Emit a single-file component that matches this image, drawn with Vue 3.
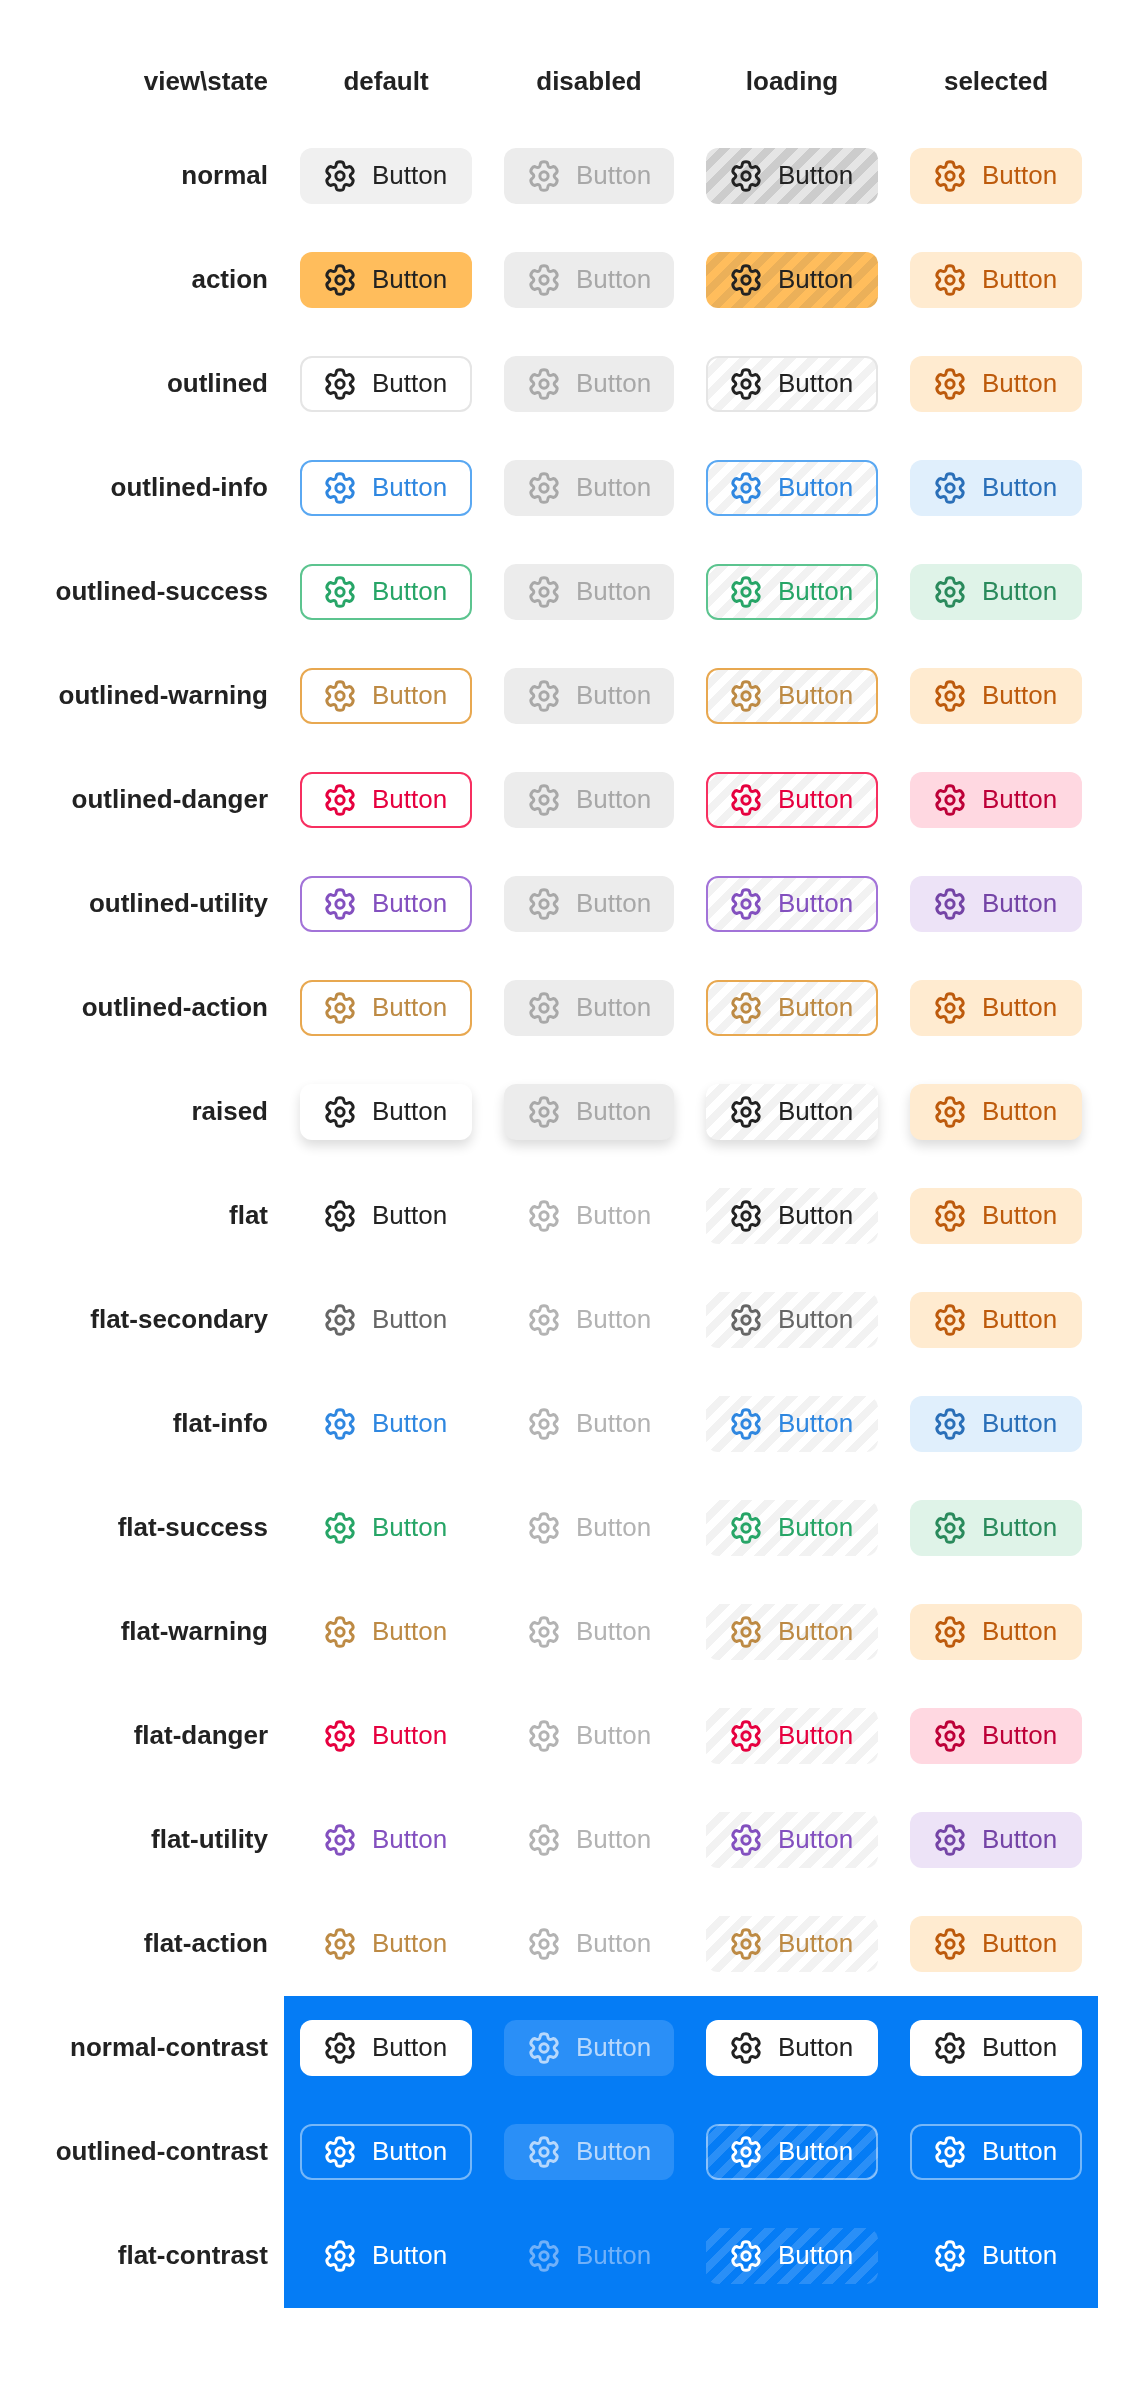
<template>
  <div class="page">
    <table class="matrix">
      <colgroup>
        <col class="col-label" />
        <col class="col-wide" />
        <col class="col-narrow" />
        <col class="col-wide" />
        <col class="col-wide" />
      </colgroup>
      <thead>
        <tr>
          <th class="row-label">view\state</th>
          <th v-for="state in states" :key="state">{{ state }}</th>
        </tr>
      </thead>
      <tbody>
        <tr v-for="view in views" :key="view.name" :class="{ contrast: view.kind === 'contrast' }">
          <th class="row-label">{{ view.name }}</th>
          <td v-for="state in states" :key="state">
            <div class="btn" :class="[view.kind, view.tone, state]">
              <svg class="icon" viewBox="0 0 24 24" fill="none" stroke="currentColor" stroke-width="2.25">
                <path :d="gearPath" />
                <circle cx="12" cy="12" r="3.1" />
              </svg>
              <span class="text">Button</span>
            </div>
          </td>
        </tr>
      </tbody>
    </table>
  </div>
</template>

<script setup>
const states = ['default', 'disabled', 'loading', 'selected']

const views = [
  { name: 'normal', kind: 'solid', tone: 'neutral' },
  { name: 'action', kind: 'solid', tone: 'action' },
  { name: 'outlined', kind: 'outlined', tone: 'neutral' },
  { name: 'outlined-info', kind: 'outlined', tone: 'info' },
  { name: 'outlined-success', kind: 'outlined', tone: 'success' },
  { name: 'outlined-warning', kind: 'outlined', tone: 'warning' },
  { name: 'outlined-danger', kind: 'outlined', tone: 'danger' },
  { name: 'outlined-utility', kind: 'outlined', tone: 'utility' },
  { name: 'outlined-action', kind: 'outlined', tone: 'warning' },
  { name: 'raised', kind: 'raised', tone: 'neutral' },
  { name: 'flat', kind: 'flat', tone: 'neutral' },
  { name: 'flat-secondary', kind: 'flat', tone: 'secondary' },
  { name: 'flat-info', kind: 'flat', tone: 'info' },
  { name: 'flat-success', kind: 'flat', tone: 'success' },
  { name: 'flat-warning', kind: 'flat', tone: 'warning' },
  { name: 'flat-danger', kind: 'flat', tone: 'danger' },
  { name: 'flat-utility', kind: 'flat', tone: 'utility' },
  { name: 'flat-action', kind: 'flat', tone: 'warning' },
  { name: 'normal-contrast', kind: 'contrast', tone: 'c-solid' },
  { name: 'outlined-contrast', kind: 'contrast', tone: 'c-outlined' },
  { name: 'flat-contrast', kind: 'contrast', tone: 'c-flat' },
]

// one tooth of the gear, pointing up from the centre, repeated six times
const tooth = [
  [[-3, 7.05], [-2.9, 7.8], [-2.7, 9.15]],
  [[-2.5, 10.2], [-1.35, 10.7], [0, 10.7]],
  [[1.35, 10.7], [2.5, 10.2], [2.7, 9.15]],
  [[2.9, 7.8], [3, 7.05], [3.8, 6.58]],
]

function place([x, y], turn) {
  const a = (turn * Math.PI) / 3
  const px = 12 + x * Math.cos(a) + y * Math.sin(a)
  const py = 12 + x * Math.sin(a) - y * Math.cos(a)
  return px.toFixed(2) + ' ' + py.toFixed(2)
}

let gearPath = 'M' + place([-3.8, 6.58], 0)
for (let turn = 0; turn < 6; turn++) {
  for (const seg of tooth) {
    gearPath += 'C' + seg.map((p) => place(p, turn)).join(' ')
  }
}
gearPath += 'Z'
</script>

<style scoped>
.page {
  padding: 40px;
  font-family: "Liberation Sans", Arial, sans-serif;
  will-change: transform;
}

.matrix {
  table-layout: fixed;
  width: 1058px;
  border-collapse: collapse;
  font-size: 26px;
  line-height: 36px;
  color: #222;
}

.col-label { width: 244px; }
.col-wide { width: 204px; }
.col-narrow { width: 202px; }

th {
  padding: 23px 16px 25px;
  font-weight: 700;
  text-align: center;
  white-space: nowrap;
}

th.row-label {
  text-align: right;
  padding-left: 0;
}

td {
  padding: 24px 16px;
}

.contrast td {
  background: #057cf5;
}

.btn {
  --fg: #222;
  --bg: transparent;
  --line: transparent;
  --stripe-a: #fff;
  --stripe-b: #f2f2f2;
  --sel-bg: #ffebd0;
  --sel-fg: #bd5a0c;
  box-sizing: border-box;
  display: flex;
  align-items: center;
  gap: 16px;
  height: 56px;
  padding: 0 22px;
  border: 2px solid var(--line);
  border-radius: 12px;
  background-color: var(--bg);
  color: var(--fg);
  white-space: nowrap;
}

.icon {
  width: 32px;
  height: 32px;
  flex: none;
}

.text {
  padding-bottom: 2px;
}

/* tones */
.secondary { --fg: #666; }
.info { --fg: #2f87e0; --line: #5aa8f2; --sel-bg: #e0effc; --sel-fg: #2a6fb8; }
.success { --fg: #27a567; --line: #5cc48f; --sel-bg: #dff3e8; --sel-fg: #2a8a5c; }
.warning { --fg: #bd8a44; --line: #e8a850; }
.danger { --fg: #e6003f; --line: #f72f60; --sel-bg: #ffd8e1; --sel-fg: #bd0038; }
.utility { --fg: #8350bf; --line: #a273d8; --sel-bg: #ede3f7; --sel-fg: #7444a6; }

/* views */
.solid.neutral { --bg: #f0f0f0; --stripe-a: #e5e5e5; --stripe-b: #ccc; }
.solid.action { --bg: #ffbd5c; --stripe-a: #ffbd5c; --stripe-b: #ebb059; }
.outlined.neutral { --line: #e5e5e5; }
.flat { --line: transparent; }
.raised {
  --bg: #fff;
  box-shadow: 0 6px 12px rgba(0, 0, 0, 0.14);
}

/* states */
.btn.disabled {
  --fg: #a8a8a8;
  --bg: #ececec;
  --line: transparent;
}

.btn.flat.disabled {
  --fg: #b3b3b3;
  --bg: transparent;
}

.loading {
  background-origin: border-box;
  background-image: repeating-linear-gradient(-45deg, var(--stripe-b) 0 8px, var(--stripe-a) 8px 16px);
}

.btn.selected {
  --fg: var(--sel-fg);
  --bg: var(--sel-bg);
  --line: transparent;
}

.c-solid {
  --fg: #222;
  --bg: #fff;
}

.c-solid.loading {
  background-image: none;
}

.btn.c-solid.selected {
  --fg: #222;
  --bg: #fff;
}

.c-outlined,
.c-flat {
  --fg: #fff;
  --stripe-a: #057cf5;
  --stripe-b: #2a8ff7;
}

.c-outlined {
  --line: rgba(255, 255, 255, 0.45);
}

.btn.c-outlined.selected {
  --fg: #fff;
  --bg: transparent;
  --line: rgba(255, 255, 255, 0.45);
}

.btn.c-flat.selected {
  --fg: #fff;
  --bg: transparent;
}

.btn.c-solid.disabled,
.btn.c-outlined.disabled {
  --fg: #b7d8fc;
  --bg: #2a8ff7;
  --line: transparent;
}

.btn.c-flat.disabled {
  --fg: #71b1f9;
  --bg: transparent;
}
</style>
